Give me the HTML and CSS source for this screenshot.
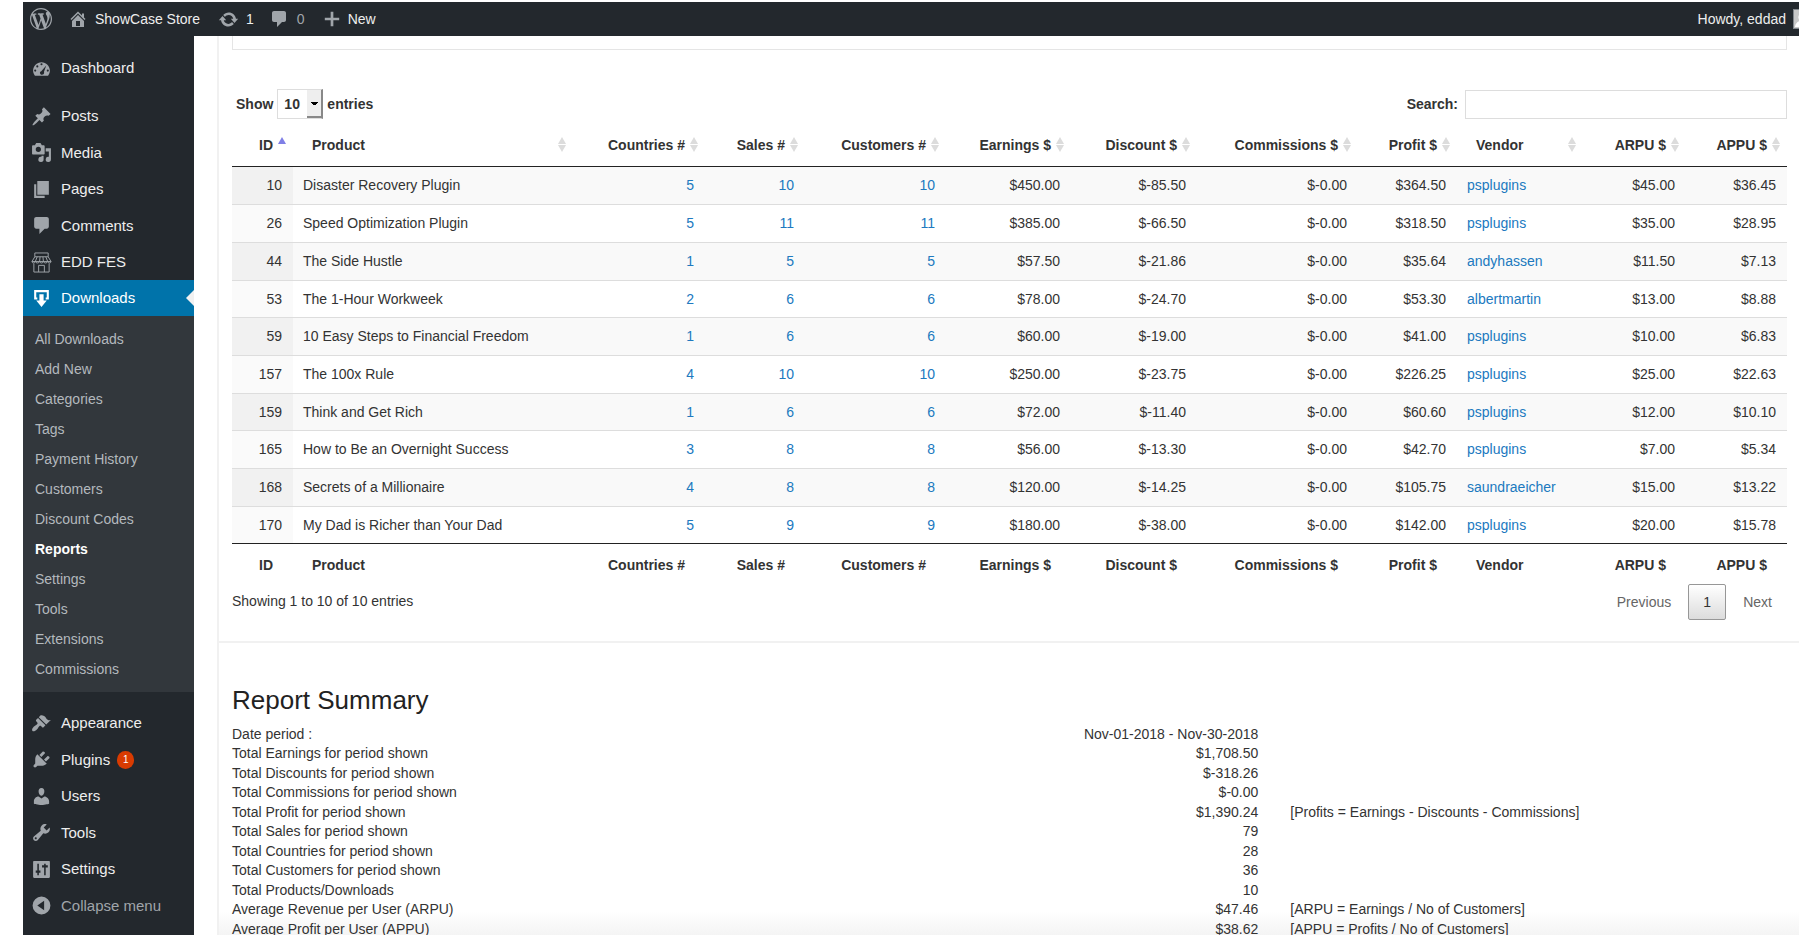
FILE: index.html
```html
<!DOCTYPE html>
<html lang="en">
<head>
    <meta charset="UTF-8">
    <meta name="viewport" content="width=device-width, initial-scale=1.0">
    <title>Reports - ShowCase Store</title>
    <link rel="stylesheet" href="styles.css">
</head>
<body>

    <!-- Admin bar -->
    <header class="adminbar">
        <a href="#" class="bar-item bar-logo" aria-label="About WordPress">
            <svg viewBox="0 0 20 20" width="22" height="22"><path fill-rule="evenodd" d="M20 10c0-5.510-4.490-10-10-10C4.480 0 0 4.490 0 10c0 5.520 4.480 10 10 10 5.510 0 10-4.480 10-10zM7.780 15.370L4.370 6.220c.55-.020 1.170-.080 1.170-.080.5-.060.44-1.130-.060-1.110 0 0-1.450.11-2.370.11-.180 0-.370 0-.580-.010C4.120 2.690 6.870 1.110 10 1.110c2.330 0 4.450.87 6.050 2.340-.680-.110-1.650.39-1.650 1.580 0 .74.450 1.360.9 2.100.350.61.550 1.360.550 2.460 0 1.490-1.400 5-1.400 5l-3.030-8.370c.54-.020.82-.170.82-.170.5-.050.44-1.250-.060-1.220 0 0-1.440.12-2.380.12-.870 0-2.330-.120-2.330-.120-.5-.030-.560 1.200-.060 1.220l.92.080 1.260 3.410zM17.410 10c.24-.640.740-1.870.430-4.250.7 1.290 1.050 2.710 1.050 4.250 0 3.290-1.730 6.240-4.400 7.780.970-2.590 1.940-5.200 2.920-7.780zM6.100 18.090C3.120 16.650 1.110 13.530 1.110 10c0-1.300.230-2.480.720-3.590C3.250 10.300 4.670 14.200 6.100 18.090zm4.030-6.630l2.580 6.980c-.860.290-1.760.450-2.710.45-.790 0-1.570-.110-2.290-.330.810-2.380 1.620-4.740 2.420-7.100z"/></svg>
        </a>
        <a href="#" class="bar-item bar-site">
            <svg viewBox="0 0 20 20" width="20" height="20"><path d="M16 8.500l1.530 1.530-1.060 1.060L10 4.600l-6.470 6.490-1.060-1.060L10 2.500l4 4v-2h2v4zm-6-2.460l6 5.990V18H4v-5.970zM12 17v-5H8v5h4z"/></svg>
            ShowCase Store
        </a>
        <a href="#" class="bar-item">
            <svg viewBox="0 0 20 20" width="21" height="21"><path d="M10.200 3.280c3.530 0 6.430 2.610 6.920 6h2.080l-3.500 4-3.500-4h2.320c-.450-1.970-2.210-3.450-4.320-3.450-1.450 0-2.730.71-3.540 1.780L4.950 5.660C6.230 4.200 8.110 3.280 10.200 3.280zm-.4 13.440c-3.520 0-6.430-2.610-6.920-6H.8l3.500-4c1.170 1.330 2.330 2.670 3.500 4H5.480c.450 1.970 2.210 3.450 4.320 3.450 1.450 0 2.730-.71 3.540-1.780l1.710 1.950c-1.280 1.460-3.150 2.380-5.250 2.380z"/></svg>
            1
        </a>
        <a href="#" class="bar-item bar-comments">
            <svg viewBox="0 0 20 20" width="20" height="20"><path d="M5 2h10c1.100 0 2 .9 2 2v7c0 1.100-.9 2-2 2h-2l-5 5v-5H5c-1.100 0-2-.9-2-2V4c0-1.100.9-2 2-2z"/></svg>
            0
        </a>
        <a href="#" class="bar-item">
            <svg viewBox="0 0 20 20" width="18" height="18"><path d="M8.500 2h3v6.500H18v3h-6.500V18h-3v-6.500H2v-3h6.500z"/></svg>
            New
        </a>
        <a href="#" class="bar-item bar-user">Howdy, eddad <span class="avatar"><svg viewBox="0 0 18 18" width="18" height="18"><circle cx="9" cy="7" r="4"/><path d="M1 18c1-5 4-7 8-7s7 2 8 7z"/></svg></span></a>
    </header>

    <div class="wrapper">

        <!-- Side menu -->
        <nav class="sidebar">
            <ul class="menu">
                <li><a href="#"><svg viewBox="0 0 20 20"><path fill-rule="evenodd" d="M3.760 17h12.480c1.100-1.370 1.760-3.110 1.760-5 0-4.420-3.580-8-8-8s-8 3.580-8 8c0 1.890.66 3.630 1.760 5zM9 6a1 1 0 1 1 2 0 1 1 0 0 1-2 0zM5 8a1 1 0 1 1 2 0 1 1 0 0 1-2 0zm3.500 6c0-.8.6-1.400 1.300-1.500L14.500 7.200 12.300 13.400c.1.200.2.400.2.700 0 1.100-.9 1.900-2 1.900s-2-.9-2-2zM3 12a1 1 0 1 1 2 0 1 1 0 0 1-2 0zm12 0a1 1 0 1 1 2 0 1 1 0 0 1-2 0z"/></svg>Dashboard</a></li>
            </ul>
            <ul class="menu">
                <li><a href="#"><svg viewBox="0 0 20 20"><path d="M10.440 3.020l1.820-1.820 6.360 6.350-1.830 1.820c-1.050-.680-2.480-.570-3.410.36l-.750.75c-.930.930-1.040 2.350-.35 3.410l-1.830 1.820-2.410-2.410-2.800 2.790c-.420.420-3.380 2.710-3.800 2.290s1.860-3.390 2.280-3.810l2.790-2.790L4.100 9.360l1.830-1.820c1.050.690 2.480.57 3.400-.36l.750-.750c.93-.920 1.050-2.350.36-3.410z"/></svg>Posts</a></li>
                <li><a href="#"><svg viewBox="0 0 20 20"><path fill-rule="evenodd" d="M13 11V4c0-.550-.450-1-1-1h-1.670L9 1H5L3.670 3H2c-.550 0-1 .450-1 1v7c0 .550.450 1 1 1h10c.550 0 1-.450 1-1zM7 4.500a2.500 2.500 0 1 1 0 5 2.500 2.500 0 0 1 0-5zM14 6h5v10.500a2.500 2.500 0 1 1-2-2.450V9h-3zm-4 8.050V13h2v3.500a2.500 2.500 0 1 1-2-2.450z"/></svg>Media</a></li>
                <li><a href="#"><svg viewBox="0 0 20 20"><path d="M6 15V2h11v13H6zm-1 1h8v2H3V5h2v11z"/></svg>Pages</a></li>
                <li><a href="#"><svg viewBox="0 0 20 20"><path d="M5 2h10c1.100 0 2 .9 2 2v7c0 1.100-.9 2-2 2h-2l-5 5v-5H5c-1.100 0-2-.9-2-2V4c0-1.100.9-2 2-2z"/></svg>Comments</a></li>
                <li><a href="#"><svg viewBox="0 0 22 22" class="line-icon"><path d="M4 1h14v4H4zM4 5L1 10h20l-3-5M1 10c0 2 3 2 3.500 0 .5 2 4 2 4.500 0 .5 2 3.500 2 4 0 .5 2 4 2 4.500 0 .5 2 3.500 2 3.500 0M6.500 5L4.500 10M9.500 5L9 10M12.500 5l.5 5M15.500 5l2 5M3 12v9h16v-9M8 21v-7h6v7"/></svg>EDD FES</a></li>
                <li class="current">
                    <a href="#"><svg viewBox="0 0 20 20"><path d="M3 2h14v9h-3V9h1V4H5v5h1v2H3zM8 6h4v6h3l-5 6-5-6h3z"/></svg>Downloads</a>
                </li>
            </ul>
            <ul class="submenu">
                <li><a href="#">All Downloads</a></li>
                <li><a href="#">Add New</a></li>
                <li><a href="#">Categories</a></li>
                <li><a href="#">Tags</a></li>
                <li><a href="#">Payment History</a></li>
                <li><a href="#">Customers</a></li>
                <li><a href="#">Discount Codes</a></li>
                <li><a href="#" class="active">Reports</a></li>
                <li><a href="#">Settings</a></li>
                <li><a href="#">Tools</a></li>
                <li><a href="#">Extensions</a></li>
                <li><a href="#">Commissions</a></li>
            </ul>
            <ul class="menu">
                <li><a href="#"><svg viewBox="0 0 20 20"><path d="M14.480 11.060L7.410 3.990l1.500-1.500c.5-.560 2.300-.470 3.510.32 1.210.8 1.430 1.280 2 2.100 1.180 1.640 2.450 2.260 4.450 1.850L14.480 11.060zm-.710.710L6.700 4.700 4.930 6.470c-.390.390-.390 1.020 0 1.410l1.060 1.060c.390.390.390 1.030 0 1.420-.6.600-1.430 1.110-2.210 1.690-.350.260-.7.530-1.010.84C1.430 14.230.4 16.080 1.400 17.070c.990 1 2.840-.030 4.180-1.360.310-.310.580-.660.850-1.020.570-.780 1.080-1.610 1.690-2.210.390-.390 1.020-.390 1.410 0l1.060 1.060c.390.390 1.020.390 1.410 0z"/></svg>Appearance</a></li>
                <li><a href="#"><svg viewBox="0 0 20 20"><path d="M13.110 4.360L9.870 7.600 8 5.730l3.240-3.240c.350-.340 1.050-.2 1.560.32.520.51.660 1.210.31 1.550zm-8 1.770l.91-1.120 9.010 9.010-1.190.84c-.71.710-2.630 1.160-3.820 1.160H6.140L4.900 17.260c-.590.590-1.540.590-2.120 0-.590-.580-.590-1.530 0-2.120l1.240-1.240v-3.880c0-1.130.4-3.190 1.090-3.890zm7.260 3.970l3.240-3.240c.340-.350 1.040-.210 1.550.31.520.51.660 1.210.31 1.550l-3.240 3.250z"/></svg>Plugins <span class="badge">1</span></a></li>
                <li><a href="#"><svg viewBox="0 0 20 20"><path d="M10 9.250c-2.270 0-2.730-3.440-2.730-3.440C7 4.020 7.820 2 9.970 2c2.160 0 2.980 2.020 2.710 3.810 0 0-.410 3.440-2.680 3.440zm0 2.570L12.720 10c2.390 0 4.520 2.330 4.520 4.530v2.490s-3.650 1.130-7.240 1.130c-3.650 0-7.240-1.130-7.240-1.130v-2.490c0-2.250 1.940-4.480 4.470-4.480z"/></svg>Users</a></li>
                <li><a href="#"><svg viewBox="0 0 20 20"><path fill-rule="evenodd" d="M16.680 9.770c-1.340 1.340-3.300 1.670-4.950.99l-5.410 6.520c-.990.990-2.590.990-3.580 0s-.990-2.590 0-3.570l6.520-5.420c-.680-1.650-.350-3.610.99-4.950 1.280-1.280 3.120-1.620 4.720-1.060l-2.890 2.890 2.820 2.820 2.860-2.870c.53 1.580.180 3.390-1.080 4.650zM3.810 16.210c.4.390 1.040.390 1.430 0 .4-.4.400-1.040 0-1.430-.390-.4-1.030-.4-1.430 0-.390.390-.390 1.030 0 1.430z"/></svg>Tools</a></li>
                <li><a href="#"><svg viewBox="0 0 20 20"><path fill-rule="evenodd" d="M18 17V3c0-.6-.4-1-1-1H3c-.6 0-1 .4-1 1v14c0 .6.4 1 1 1h14c.6 0 1-.4 1-1zM6 4.500h1.500V11H9v2H7.500v2.500H6V13H4.500v-2H6zM12.500 4.500h1.500V6h2v2h-2v7.500h-1.500V8h-2V6h2z"/></svg>Settings</a></li>
                <li><button type="button" class="collapse"><svg viewBox="0 0 20 20"><path fill-rule="evenodd" d="M10 1.500a8.500 8.500 0 1 1 0 17 8.500 8.500 0 0 1 0-17zM12.500 5.500L6 10l6.500 4.500z"/></svg>Collapse menu</button></li>
            </ul>
        </nav>

        <!-- Report -->
        <main class="content">
            <section class="report">
                <div class="filter-box"></div>

                <div class="table-tools">
                    <div class="length">
                        <label for="length">Show</label>
                        <select id="length">
                            <option>10</option>
                            <option>25</option>
                            <option>50</option>
                        </select>
                        <label for="length">entries</label>
                    </div>
                    <div class="search">
                        <label for="search">Search:</label>
                        <input id="search" type="search">
                    </div>
                </div>

                <table class="data-table">
                    <colgroup>
                        <col class="col-id">
                        <col class="col-product">
                        <col class="col-countries">
                        <col class="col-sales">
                        <col class="col-customers">
                        <col class="col-earnings">
                        <col class="col-discount">
                        <col class="col-commissions">
                        <col class="col-profit">
                        <col class="col-vendor">
                        <col class="col-arpu">
                        <col class="col-appu">
                    </colgroup>
                    <thead>
                        <tr>
                            <th class="sorted">ID</th>
                            <th class="left">Product</th>
                            <th>Countries #</th>
                            <th>Sales #</th>
                            <th>Customers #</th>
                            <th>Earnings $</th>
                            <th>Discount $</th>
                            <th>Commissions $</th>
                            <th>Profit $</th>
                            <th class="left">Vendor</th>
                            <th>ARPU $</th>
                            <th>APPU $</th>
                        </tr>
                    </thead>
                    <tbody>
                        <tr><td>10</td><td class="left">Disaster Recovery Plugin</td><td><a href="#">5</a></td><td><a href="#">10</a></td><td><a href="#">10</a></td><td>$450.00</td><td>$-85.50</td><td>$-0.00</td><td>$364.50</td><td class="left"><a href="#">psplugins</a></td><td>$45.00</td><td>$36.45</td></tr>
                        <tr><td>26</td><td class="left">Speed Optimization Plugin</td><td><a href="#">5</a></td><td><a href="#">11</a></td><td><a href="#">11</a></td><td>$385.00</td><td>$-66.50</td><td>$-0.00</td><td>$318.50</td><td class="left"><a href="#">psplugins</a></td><td>$35.00</td><td>$28.95</td></tr>
                        <tr><td>44</td><td class="left">The Side Hustle</td><td><a href="#">1</a></td><td><a href="#">5</a></td><td><a href="#">5</a></td><td>$57.50</td><td>$-21.86</td><td>$-0.00</td><td>$35.64</td><td class="left"><a href="#">andyhassen</a></td><td>$11.50</td><td>$7.13</td></tr>
                        <tr><td>53</td><td class="left">The 1-Hour Workweek</td><td><a href="#">2</a></td><td><a href="#">6</a></td><td><a href="#">6</a></td><td>$78.00</td><td>$-24.70</td><td>$-0.00</td><td>$53.30</td><td class="left"><a href="#">albertmartin</a></td><td>$13.00</td><td>$8.88</td></tr>
                        <tr><td>59</td><td class="left">10 Easy Steps to Financial Freedom</td><td><a href="#">1</a></td><td><a href="#">6</a></td><td><a href="#">6</a></td><td>$60.00</td><td>$-19.00</td><td>$-0.00</td><td>$41.00</td><td class="left"><a href="#">psplugins</a></td><td>$10.00</td><td>$6.83</td></tr>
                        <tr><td>157</td><td class="left">The 100x Rule</td><td><a href="#">4</a></td><td><a href="#">10</a></td><td><a href="#">10</a></td><td>$250.00</td><td>$-23.75</td><td>$-0.00</td><td>$226.25</td><td class="left"><a href="#">psplugins</a></td><td>$25.00</td><td>$22.63</td></tr>
                        <tr><td>159</td><td class="left">Think and Get Rich</td><td><a href="#">1</a></td><td><a href="#">6</a></td><td><a href="#">6</a></td><td>$72.00</td><td>$-11.40</td><td>$-0.00</td><td>$60.60</td><td class="left"><a href="#">psplugins</a></td><td>$12.00</td><td>$10.10</td></tr>
                        <tr><td>165</td><td class="left">How to Be an Overnight Success</td><td><a href="#">3</a></td><td><a href="#">8</a></td><td><a href="#">8</a></td><td>$56.00</td><td>$-13.30</td><td>$-0.00</td><td>$42.70</td><td class="left"><a href="#">psplugins</a></td><td>$7.00</td><td>$5.34</td></tr>
                        <tr><td>168</td><td class="left">Secrets of a Millionaire</td><td><a href="#">4</a></td><td><a href="#">8</a></td><td><a href="#">8</a></td><td>$120.00</td><td>$-14.25</td><td>$-0.00</td><td>$105.75</td><td class="left"><a href="#">saundraeicher</a></td><td>$15.00</td><td>$13.22</td></tr>
                        <tr><td>170</td><td class="left">My Dad is Richer than Your Dad</td><td><a href="#">5</a></td><td><a href="#">9</a></td><td><a href="#">9</a></td><td>$180.00</td><td>$-38.00</td><td>$-0.00</td><td>$142.00</td><td class="left"><a href="#">psplugins</a></td><td>$20.00</td><td>$15.78</td></tr>
                    </tbody>
                    <tfoot>
                        <tr>
                            <th>ID</th>
                            <th class="left">Product</th>
                            <th>Countries #</th>
                            <th>Sales #</th>
                            <th>Customers #</th>
                            <th>Earnings $</th>
                            <th>Discount $</th>
                            <th>Commissions $</th>
                            <th>Profit $</th>
                            <th class="left">Vendor</th>
                            <th>ARPU $</th>
                            <th>APPU $</th>
                        </tr>
                    </tfoot>
                </table>

                <div class="table-footer">
                    <div class="info">Showing 1 to 10 of 10 entries</div>
                    <div class="pager">
                        <a href="#">Previous</a>
                        <a href="#" class="page">1</a>
                        <a href="#">Next</a>
                    </div>
                </div>
            </section>

            <!-- Summary -->
            <section class="summary">
                <h2>Report Summary</h2>
                <table class="summary-table">
                    <tr><td>Date period :</td><td class="value">Nov-01-2018 - Nov-30-2018</td><td></td></tr>
                    <tr><td>Total Earnings for period shown</td><td class="value">$1,708.50</td><td></td></tr>
                    <tr><td>Total Discounts for period shown</td><td class="value">$-318.26</td><td></td></tr>
                    <tr><td>Total Commissions for period shown</td><td class="value">$-0.00</td><td></td></tr>
                    <tr><td>Total Profit for period shown</td><td class="value">$1,390.24</td><td>[Profits = Earnings - Discounts - Commissions]</td></tr>
                    <tr><td>Total Sales for period shown</td><td class="value">79</td><td></td></tr>
                    <tr><td>Total Countries for period shown</td><td class="value">28</td><td></td></tr>
                    <tr><td>Total Customers for period shown</td><td class="value">36</td><td></td></tr>
                    <tr><td>Total Products/Downloads</td><td class="value">10</td><td></td></tr>
                    <tr><td>Average Revenue per User (ARPU)</td><td class="value">$47.46</td><td>[ARPU = Earnings / No of Customers]</td></tr>
                    <tr><td>Average Profit per User (APPU)</td><td class="value">$38.62</td><td>[APPU = Profits / No of Customers]</td></tr>
                </table>
            </section>
        </main>

    </div>

</body>
</html>
```

FILE: styles.css
```css
* {
    box-sizing: border-box;
}

body {
    margin: 0;
    padding: 2px 0 0 23px;
    height: 100vh;
    overflow: hidden;
    display: flex;
    flex-direction: column;
    background-color: #ffffff;
    font-family: "Liberation Sans", Arial, sans-serif;
    font-size: 14px;
    line-height: 20px;
    color: #333333;
}

a {
    color: #2079bf;
    text-decoration: none;
}

ul {
    list-style: none;
    margin: 0;
    padding: 0;
}

/* Admin bar */
.adminbar {
    display: flex;
    align-items: center;
    gap: 18px;
    flex-shrink: 0;
    height: 34px;
    padding-left: 7px;
    background-color: #23282d;
    overflow: hidden;
}

.bar-item {
    display: flex;
    align-items: center;
    gap: 7px;
    color: #eeeeee;
    white-space: nowrap;
}

.bar-item svg {
    fill: #a0a5aa;
}

.bar-site {
    margin-left: -2px;
}

.bar-comments {
    margin-left: -3px;
    gap: 8px;
    color: #a0a5aa;
}

.bar-user {
    margin-left: auto;
    margin-right: -12px;
}

.avatar {
    display: flex;
    width: 18px;
    height: 20px;
    border: 1px solid #82878c;
    background-color: #c8c8c8;
    overflow: hidden;
}

.avatar svg {
    fill: #ffffff;
}

.wrapper {
    flex: 1;
    display: flex;
    min-height: 0;
}

/* Side menu */
.sidebar {
    flex: 0 0 171px;
    padding-top: 14px;
    background-color: #23282d;
    overflow: hidden;
}

.menu + .menu {
    margin-top: 12px;
}

.submenu + .menu {
    margin-top: 13px;
}

.menu li {
    height: 36px;
}

.menu li:nth-child(even) {
    height: 37px;
}

.menu li.current {
    height: 36px;
}

.menu a,
.collapse {
    display: flex;
    align-items: center;
    gap: 9px;
    width: 100%;
    height: 100%;
    padding: 0 0 0 8px;
    color: #eeeeee;
    font-size: 15px;
}

.menu svg {
    width: 21px;
    height: 21px;
    fill: #a0a5aa;
}

.menu .line-icon {
    fill: none;
    stroke: #a0a5aa;
}

.menu .current a {
    position: relative;
    background-color: #0073aa;
    color: #ffffff;
}

.menu .current svg {
    fill: #ffffff;
}

/* Arrow pointing at the open page */
.current a::after {
    content: "";
    position: absolute;
    right: 0;
    top: 10px;
    border: 8px solid transparent;
    border-right-color: #f1f1f1;
    border-left: 0;
}

.collapse {
    border: none;
    background: none;
    color: #a0a5aa;
    font-family: inherit;
    cursor: pointer;
}

.badge {
    width: 17px;
    height: 18px;
    border-radius: 9px;
    background-color: #d83b01;
    color: #ffffff;
    font-size: 10px;
    line-height: 18px;
    text-align: center;
    margin-left: -2px;
}

.submenu {
    padding: 8px 0;
    background-color: #32373c;
}

.submenu a {
    display: block;
    padding-left: 12px;
    line-height: 30px;
    color: #b4b9be;
}

.submenu .active {
    color: #ffffff;
    font-weight: bold;
}

/* Report */
.content {
    flex: 1;
    min-width: 0;
    margin-left: 23px;
    border-left: 2px solid #f1f1f1;
    background: linear-gradient(transparent, #f4f4f4) bottom / 100% 24px no-repeat;
}

.report {
    padding: 0 12px 21px 13px;
    border-bottom: 2px solid #f1f1f1;
}

.filter-box {
    height: 14px;
    border: 1px solid #e5e5e5;
    border-top: none;
}

.table-tools {
    display: flex;
    justify-content: space-between;
    margin-top: 39px;
    font-weight: bold;
}

.length {
    display: flex;
    align-items: center;
    gap: 4px;
    padding-left: 4px;
}

/* Old style drop-down with a raised arrow button */
.length select {
    appearance: none;
    width: 46px;
    height: 30px;
    padding: 0 0 0 6px;
    border: 1px solid #dddddd;
    border-right: 2px solid #888888;
    border-radius: 0;
    background: linear-gradient(#000000, #000000) 33px 12px / 7px 1px no-repeat,
        linear-gradient(#000000, #000000) 34px 13px / 5px 1px no-repeat,
        linear-gradient(#000000, #000000) 35px 14px / 3px 1px no-repeat,
        linear-gradient(#888888, #888888) 29px 26px / 15px 2px no-repeat,
        linear-gradient(#eeeeee, #eeeeee) 29px 0 / 15px 28px no-repeat #ffffff;
    color: #333333;
    font: inherit;
}

.search {
    display: flex;
    align-items: center;
    gap: 7px;
}

.search input {
    width: 322px;
    height: 29px;
    border: 1px solid #dddddd;
    background-color: #ffffff;
}

.data-table {
    width: 100%;
    table-layout: fixed;
    border-collapse: separate;
    border-spacing: 0;
    text-align: right;
}

.col-id { width: 61px; }
.col-product { width: 280px; }
.col-countries { width: 132px; }
.col-sales { width: 100px; }
.col-customers { width: 141px; }
.col-earnings { width: 125px; }
.col-discount { width: 126px; }
.col-commissions { width: 161px; }
.col-profit { width: 99px; }
.col-vendor { width: 126px; }
.col-arpu { width: 103px; }
.col-appu { width: 101px; }

.data-table th {
    position: relative;
    height: 43px;
    padding: 0 20px 1px 19px;
    white-space: nowrap;
}

.data-table thead th {
    height: 48px;
    padding-top: 6px;
    border-bottom: 1px solid #222222;
}

.data-table tfoot th {
    border-top: 1px solid #222222;
}

.data-table td {
    height: 38px;
    padding: 0 11px 1px;
    border-top: 1px solid #dddddd;
}

.data-table tr:nth-child(3n+1) td {
    height: 37px;
}

.data-table tr:first-child td {
    border-top: none;
}

.data-table .left {
    text-align: left;
}

.data-table td.left {
    padding-left: 10px;
}

.data-table tbody tr:nth-child(odd) {
    background-color: #f9f9f9;
}

.data-table tbody td:first-child {
    background-color: #fafafa;
}

.data-table tbody tr:nth-child(odd) td:first-child {
    background-color: #f1f1f1;
}

/* Sort arrows */
.data-table thead th::before,
.data-table thead th::after {
    content: "";
    position: absolute;
    right: 7px;
    border: 4px solid transparent;
}

.data-table thead th::before {
    top: 18px;
    border-bottom: 7px solid #dcdcdc;
    border-top: 0;
}

.data-table thead th::after {
    top: 26px;
    border-top: 7px solid #dcdcdc;
    border-bottom: 0;
}

.data-table thead .sorted::before {
    border-bottom-color: #7f7fe6;
}

.data-table thead .sorted::after {
    display: none;
}

.table-footer {
    display: flex;
    justify-content: space-between;
    align-items: flex-start;
    margin-top: -2px;
}

.info {
    padding-top: 7px;
}

.pager {
    display: flex;
    align-items: center;
    gap: 17px;
    padding-right: 15px;
}

.pager a {
    color: #666666;
}

.pager .page {
    width: 38px;
    height: 36px;
    border: 1px solid #979797;
    border-radius: 2px;
    background: linear-gradient(#ffffff, #dcdcdc);
    color: #333333;
    line-height: 34px;
    text-align: center;
}

/* Summary */
.summary {
    padding: 40px 12px 0 13px;
}

.summary h2 {
    margin: 0 0 7px;
    font-size: 26px;
    font-weight: normal;
    line-height: 34px;
    color: #222222;
}

.summary-table {
    width: 100%;
    border-spacing: 0;
    table-layout: fixed;
}

.summary-table td {
    height: 20px;
    padding: 0;
    line-height: 19px;
}

.summary-table tr:nth-child(even) td {
    height: 19px;
}

.summary-table td:first-child {
    width: 45%;
}

.summary-table .value {
    width: 21%;
    text-align: right;
}

.summary-table td:last-child {
    padding-left: 32px;
}
```
